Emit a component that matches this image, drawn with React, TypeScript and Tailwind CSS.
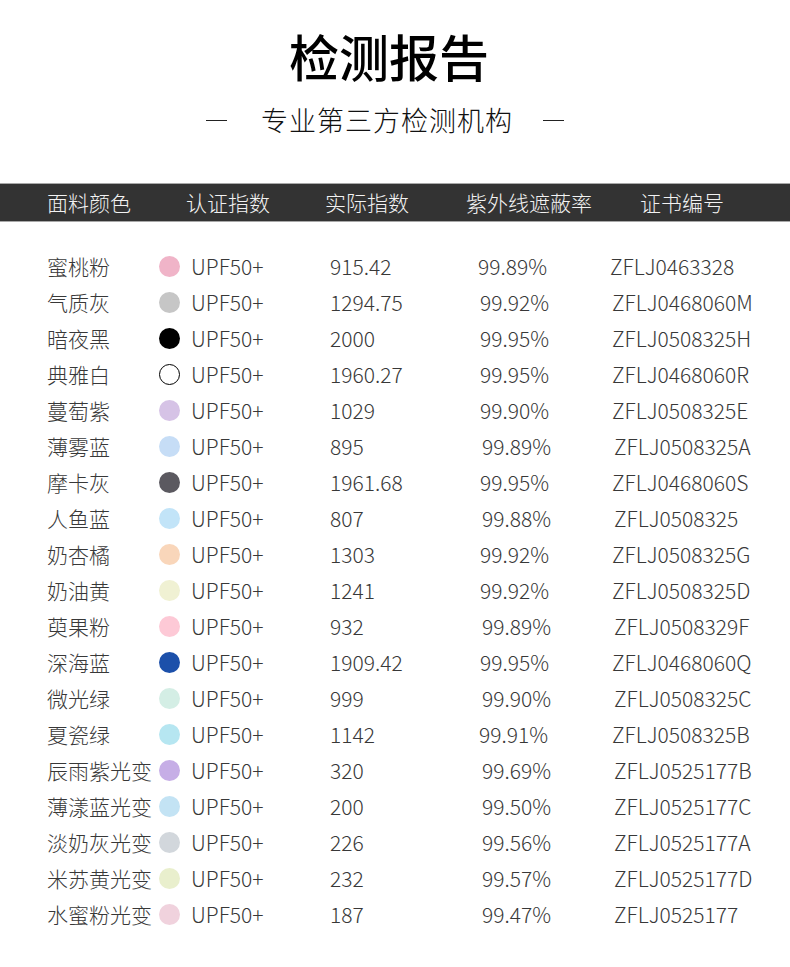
const rows: [string, string, string, string, string, number, number][] = [
  ["蜜桃粉", "bg-[#f0b4c8]", "915.42", "99.89%", "ZFLJ0463328", -2, -2],
  ["气质灰", "bg-[#c6c6c6]", "1294.75", "99.92%", "ZFLJ0468060M", 0, 0],
  ["暗夜黑", "bg-black", "2000", "99.95%", "ZFLJ0508325H", 0, 0],
  ["典雅白", "bg-white border-[1.5px] border-black", "1960.27", "99.95%", "ZFLJ0468060R", 0, 0],
  ["蔓萄紫", "bg-[#d6c3e6]", "1029", "99.90%", "ZFLJ0508325E", 0, 0],
  ["薄雾蓝", "bg-[#c6ddf6]", "895", "99.89%", "ZFLJ0508325A", 2, 2],
  ["摩卡灰", "bg-[#5b5960]", "1961.68", "99.95%", "ZFLJ0468060S", 0, 0],
  ["人鱼蓝", "bg-[#c2e4f8]", "807", "99.88%", "ZFLJ0508325", 2, 2],
  ["奶杏橘", "bg-[#f9d6ba]", "1303", "99.92%", "ZFLJ0508325G", 0, 0],
  ["奶油黄", "bg-[#f0f1d3]", "1241", "99.92%", "ZFLJ0508325D", 0, 0],
  ["萸果粉", "bg-[#fdc9d6]", "932", "99.89%", "ZFLJ0508329F", 2, 2],
  ["深海蓝", "bg-[#1c50aa]", "1909.42", "99.95%", "ZFLJ0468060Q", 0, 0],
  ["微光绿", "bg-[#d4eee5]", "999", "99.90%", "ZFLJ0508325C", 2, 2],
  ["夏瓷绿", "bg-[#b6e6f1]", "1142", "99.91%", "ZFLJ0508325B", -1, 0],
  ["辰雨紫光变", "bg-[#c6aee6]", "320", "99.69%", "ZFLJ0525177B", 2, 2],
  ["薄漾蓝光变", "bg-[#c3e3f4]", "200", "99.50%", "ZFLJ0525177C", 2, 2],
  ["淡奶灰光变", "bg-[#d2d7dc]", "226", "99.56%", "ZFLJ0525177A", 2, 2],
  ["米苏黄光变", "bg-[#e9efcd]", "232", "99.57%", "ZFLJ0525177D", 2, 2],
  ["水蜜粉光变", "bg-[#f0d2dd]", "187", "99.47%", "ZFLJ0525177", 2, 2],
];

const heads = ["面料颜色", "认证指数", "实际指数", "紫外线遮蔽率", "证书编号"];
const headWidths = ["w-[139px]", "w-[139px]", "w-[141px]", "w-[174px]", ""];

export default function App() {
  return (
    <div className="w-[790px] h-[967px] bg-white font-['Noto_Sans_CJK_SC',sans-serif]">
      <h1 className="pt-[26px] pr-[12px] text-center text-[50px] leading-[58px] font-medium text-black">检测报告</h1>
      <div className="mt-[18px] pr-[20px] flex items-center justify-center text-[27px] leading-[36px] font-light text-[#111]">
        <span className="h-px w-[21px] bg-[#222]" />
        <span className="ml-[34px] mr-[30px] tracking-[1px]">专业第三方检测机构</span>
        <span className="h-px w-[21px] bg-[#222]" />
      </div>

      <div className="mt-[45px] flex h-[39px] items-center border-y border-[#a8a8a8] bg-[#333] pl-[47px] text-[21px] font-light text-[#f2f2f2]">
        {heads.map((h, i) => (
          <div key={h} className={headWidths[i]}>
            {h}
          </div>
        ))}
      </div>

      <div className="mt-[26px] text-[21px] font-light text-[#383838]">
        {rows.map(([name, color, idx, pct, cert, dp, dc]) => (
          <div key={name} className="flex h-[36px] items-center pl-[47px] leading-none">
            <div className="w-[112px] whitespace-nowrap">{name}</div>
            <div className={`h-[21px] w-[21px] shrink-0 rounded-full ${color}`} />
            <div className="ml-[11px] w-[139px]">UPF50+</div>
            <div className="w-[150px]">{idx}</div>
            <div className="w-[132px]" style={{ marginLeft: dp }}>
              {pct}
            </div>
            <div style={{ marginLeft: dc - dp }}>{cert}</div>
          </div>
        ))}
      </div>
    </div>
  );
}
